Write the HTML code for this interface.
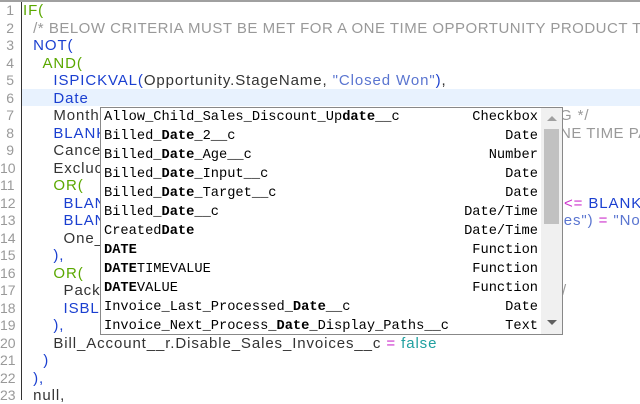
<!DOCTYPE html>
<html><head><meta charset="utf-8"><style>
body{margin:0;width:640px;height:400px;overflow:hidden;background:#fff;position:relative;font-family:"Liberation Sans",sans-serif;}
.top{position:absolute;left:0;top:0;width:640px;height:2px;background:#a0a0a0;}
.gut{position:absolute;left:21px;top:2px;width:1px;height:398px;background:#333;}
.act{position:absolute;left:22px;top:89px;width:618px;height:17px;background:#e8f2fe;}
.ln{position:absolute;left:0;width:14px;text-align:right;color:#999;font-size:14px;line-height:17px;}
.cd{position:absolute;left:23px;right:0;overflow:hidden;font-size:15px;letter-spacing:0.9px;line-height:17px;color:#333;white-space:pre;}
.x{position:absolute;right:0;overflow:hidden;font-size:15px;letter-spacing:0.9px;line-height:17px;color:#333;white-space:pre;}
.g{color:#5aa800}.b{color:#1a3fd0}.c{color:#999}.s{color:#5a75d0}.p{color:#cc33cc}.t{color:#20a0a0}
.pop{position:absolute;left:100px;top:107px;width:461px;height:226px;border:1px solid #888;background:#fff;overflow:hidden;font-family:"Liberation Mono",monospace;font-size:13.7px;}
.r{position:absolute;left:3px;width:434px;height:19px;line-height:19px;color:#000;white-space:pre;}
.r b{font-weight:bold}
.r span{position:absolute;right:0;top:0}
.sb{position:absolute;left:440px;top:0;width:21px;height:226px;background:#f0f0f0;}
.th{position:absolute;left:3px;top:21px;width:15px;height:95px;background:#c1c1c1;}
</style></head><body>
<div class="top"></div>
<div class="act"></div>
<div class="gut"></div>
<div class="ln" style="top:2px">1</div><div class="ln" style="top:19.5px">2</div><div class="ln" style="top:37px">3</div><div class="ln" style="top:54.5px">4</div><div class="ln" style="top:72px">5</div><div class="ln" style="top:89.5px">6</div><div class="ln" style="top:107px">7</div><div class="ln" style="top:124.5px">8</div><div class="ln" style="top:142px">9</div><div class="ln" style="top:159.5px">10</div><div class="ln" style="top:177px">11</div><div class="ln" style="top:194.5px">12</div><div class="ln" style="top:212px">13</div><div class="ln" style="top:229.5px">14</div><div class="ln" style="top:247px">15</div><div class="ln" style="top:264.5px">16</div><div class="ln" style="top:282px">17</div><div class="ln" style="top:299.5px">18</div><div class="ln" style="top:317px">19</div><div class="ln" style="top:334.5px">20</div><div class="ln" style="top:352px">21</div><div class="ln" style="top:369.5px">22</div><div class="ln" style="top:387px">23</div>
<div class="cd" style="top:2px"><span class="g">IF(</span></div>
<div class="cd" style="top:19.5px">  <span class="c" style="letter-spacing:0.5px">/* BELOW CRITERIA MUST BE MET FOR A ONE TIME OPPORTUNITY PRODUCT TO</span></div>
<div class="cd" style="top:37px">  <span class="b">NOT(</span></div>
<div class="cd" style="top:54.5px">    <span class="g">AND(</span></div>
<div class="cd" style="top:72px">      <span class="b">ISPICKVAL(</span>Opportunity.StageName, <span class="s">"Closed Won"</span><span class="b">)</span>,</div>
<div class="cd" style="top:89.5px">      <span class="b">Date</span></div>
<div class="cd" style="top:107px">      Month</div>
<div class="cd" style="top:124.5px">      <span class="b">BLANK</span></div>
<div class="cd" style="top:142px">      Cance</div>
<div class="cd" style="top:159.5px">      Excluc</div>
<div class="cd" style="top:177px">      <span class="g">OR(</span></div>
<div class="cd" style="top:194.5px">        <span class="b">BLAN</span></div>
<div class="cd" style="top:212px">        <span class="b">BLAN</span></div>
<div class="cd" style="top:229.5px">        One_</div>
<div class="cd" style="top:247px">      <span class="b">),</span></div>
<div class="cd" style="top:264.5px">      <span class="g">OR(</span></div>
<div class="cd" style="top:282px">        Pack</div>
<div class="cd" style="top:299.5px">        <span class="b">ISBL</span></div>
<div class="cd" style="top:317px">      <span class="b">),</span></div>
<div class="cd" style="top:334.5px">      Bill_Account__r.Disable_Sales_Invoices__c <span class="p">=</span> <span class="t">false</span></div>
<div class="cd" style="top:352px">    <span class="b">)</span></div>
<div class="cd" style="top:369.5px">  <span class="b">),</span></div>
<div class="cd" style="top:387px">  null,</div>
<div class="x c" style="left:560px;top:107px">G */</div>
<div class="x c" style="left:560px;top:124.5px;letter-spacing:0.5px">NE TIME PA</div>
<div class="x" style="left:564px;top:194.5px"><span class="p">&lt;=</span> <span class="b">BLANK</span></div>
<div class="x" style="left:560px;top:212px"><span class="s">'es")</span> <span class="p">=</span> <span class="s">"No</span></div>
<div class="x c" style="left:562px;top:282px">/</div>
<div class="pop">
<div class="r" style="top:0">Allow_Child_Sales_Discount_Up<b>date</b>__c<span>Checkbox</span></div>
<div class="r" style="top:19px">Billed_<b>Date</b>_2__c<span>Date</span></div>
<div class="r" style="top:38px">Billed_<b>Date</b>_Age__c<span>Number</span></div>
<div class="r" style="top:57px">Billed_<b>Date</b>_Input__c<span>Date</span></div>
<div class="r" style="top:76px">Billed_<b>Date</b>_Target__c<span>Date</span></div>
<div class="r" style="top:95px">Billed_<b>Date</b>__c<span>Date/Time</span></div>
<div class="r" style="top:114px">Created<b>Date</b><span>Date/Time</span></div>
<div class="r" style="top:133px"><b>DATE</b><span>Function</span></div>
<div class="r" style="top:152px"><b>DATE</b>TIMEVALUE<span>Function</span></div>
<div class="r" style="top:171px"><b>DATE</b>VALUE<span>Function</span></div>
<div class="r" style="top:190px">Invoice_Last_Processed_<b>Date</b>__c<span>Date</span></div>
<div class="r" style="top:209px">Invoice_Next_Process_<b>Date</b>_Display_Paths__c<span style="background:#fff;padding-left:8px">Text</span></div>
<div class="sb"><div class="th"></div>
<div style="position:absolute;left:6px;top:8px;width:0;height:0;border-left:5px solid transparent;border-right:5px solid transparent;border-bottom:5px solid #a0a0a0"></div>
<div style="position:absolute;left:6px;top:212px;width:0;height:0;border-left:5px solid transparent;border-right:5px solid transparent;border-top:5px solid #606060"></div>
</div>
</div>
</body></html>
